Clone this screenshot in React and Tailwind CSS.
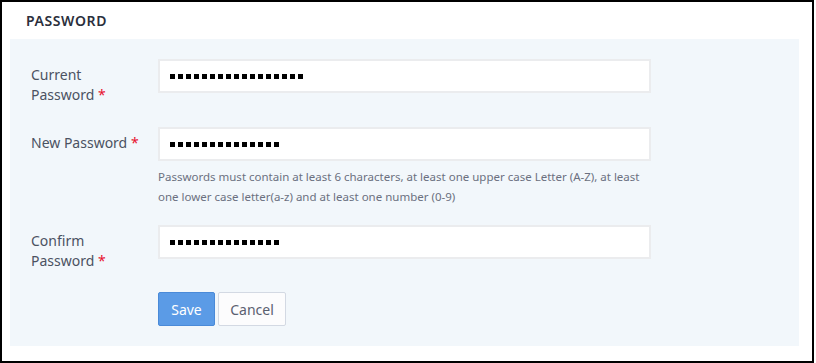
import React from 'react';

const Dots = ({ count }) => (
  <div className="flex items-center gap-[3px]">
    {Array.from({ length: count }).map((_, i) => (
      <span key={i} className="block w-[5px] h-[5px] bg-black" />
    ))}
  </div>
);

const Field = ({ label, dots, children }) => (
  <div className="flex">
    <label className="w-[127px] shrink-0 pt-[6px] pr-[16px] text-[14px] leading-[20px] text-[#4b5262]">
      {label} <span className="text-[#e8112d]">*</span>
    </label>
    <div className="w-[493px]">
      <div className="h-[34px] border-2 border-[#ebecee] bg-white pl-[10px] flex items-center">
        <Dots count={dots} />
      </div>
      {children}
    </div>
  </div>
);

export default function App() {
  return (
    <div className="w-[814px] h-[363px] border-2 border-black bg-white" style={{ fontFamily: '"Noto Sans", sans-serif' }}>
      <h2 className="h-[37px] pl-[24px] flex items-center text-[14px] font-semibold tracking-[0.6px] text-[#2b2f3c]">
        PASSWORD
      </h2>
      <div className="ml-[8px] w-[789px] h-[307px] bg-[#f2f7fb] pt-[20px] pl-[21px]">
        <Field label="Current Password" dots={17} />
        <div className="h-[22px]" />
        <Field label="New Password" dots={14}>
          <p className="mt-[6px] text-[11.5px] leading-[20px] text-[#6b7080]">
            Passwords must contain at least 6 characters, at least one upper case Letter (A-Z), at least one lower case letter(a-z) and at least one number (0-9)
          </p>
        </Field>
        <div className="h-[18px]" />
        <Field label="Confirm Password" dots={14} />
        <div className="flex gap-[3px] mt-[21px] pl-[127px]">
          <button className="w-[57px] h-[34px] rounded-[2px] border border-[#4a8ad8] bg-[#5b9be6] text-[14px] text-white">
            Save
          </button>
          <button className="w-[68px] h-[34px] rounded-[2px] border border-[#d3d9e3] bg-[#fcfcfd] text-[14px] text-[#5a6070]">
            Cancel
          </button>
        </div>
      </div>
    </div>
  );
}
